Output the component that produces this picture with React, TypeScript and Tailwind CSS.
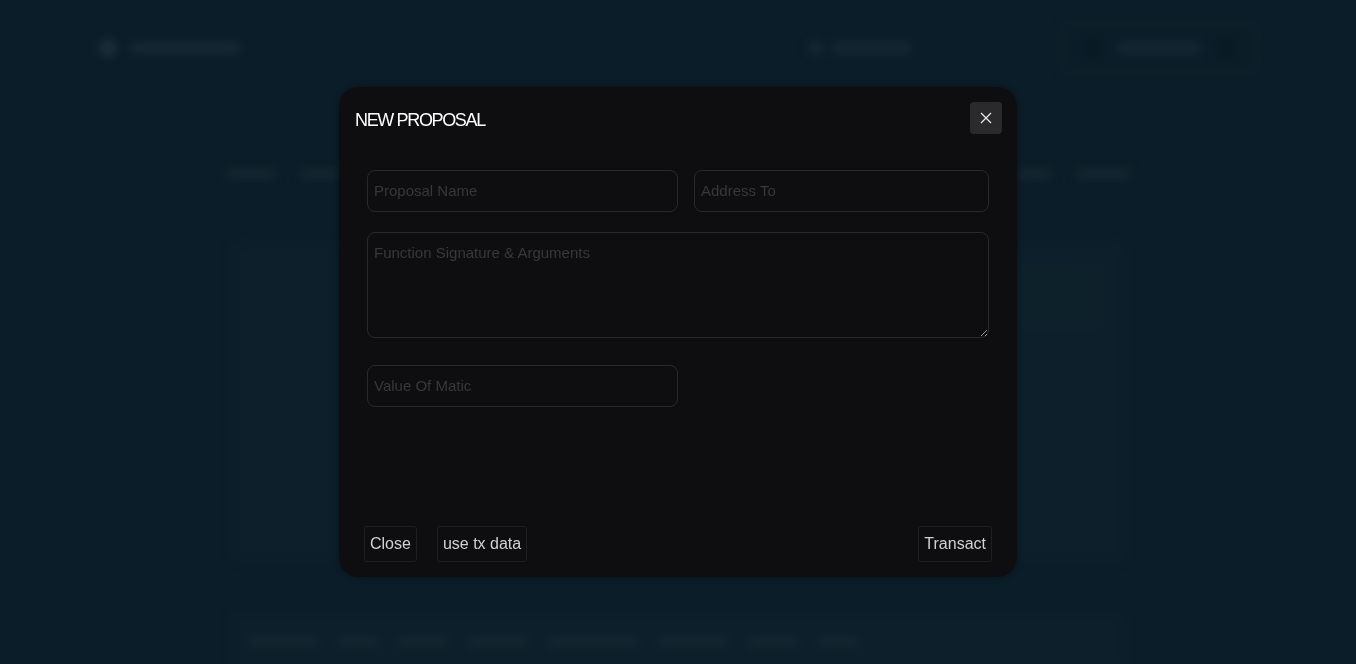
import React from "react";

const font = { fontFamily: '"Liberation Sans", Arial, sans-serif' };

function BackdropPage() {
    // the page behind the dialog, blurred out
    return (
        <div className="min-h-[664px] w-full bg-[#0b1d28] overflow-hidden">
            <div className="blur-[4px]">
                <header className="flex items-center justify-between px-[98px] h-[96px]">
                    <div className="flex items-center gap-3">
                        <div className="w-5 h-5 rounded-full bg-[#1a2c36]" />
                        <div className="w-[110px] h-3 rounded bg-[#16272f]" />
                    </div>
                    <div className="flex items-center gap-2 ml-[420px]">
                        <div className="w-4 h-4 rounded-full bg-[#15262f]" />
                        <div className="w-[80px] h-3 rounded bg-[#15262f]" />
                    </div>
                    <div className="flex items-center gap-4 w-[198px] h-[50px] border-2 border-[#13252f] rounded-lg px-5">
                        <div className="w-5 h-5 rounded-full bg-[#0a1a23]" />
                        <div className="w-[90px] h-3 rounded bg-[#15262f]" />
                        <div className="w-5 h-5 rounded-full bg-[#0a1a23]" />
                    </div>
                </header>
                <div className="mx-auto w-[905px] mt-[72px] flex items-center justify-between">
                    <div className="flex gap-6">
                        <div className="w-[50px] h-3 rounded bg-[#13252e]" />
                        <div className="w-[40px] h-3 rounded bg-[#13252e]" />
                    </div>
                    <div className="flex gap-6">
                        <div className="w-[35px] h-3 rounded bg-[#13252e]" />
                        <div className="w-[55px] h-3 rounded bg-[#13252e]" />
                    </div>
                </div>
                <div className="mx-auto w-[895px] h-[320px] mt-[62px] border border-[#10222c] rounded-lg bg-[#0c1f2a] flex justify-end p-6">
                    <div className="w-[85px] h-[60px] border border-[#122530] rounded-md bg-[#0d212b]" />
                </div>
                <div className="mx-auto w-[895px] h-[60px] mt-[50px] border border-[#10222c] rounded-lg bg-[#0c1f2a] flex items-center gap-5 px-4">
                    <div className="w-[70px] h-3 rounded bg-[#13262f]" />
                    <div className="w-[40px] h-3 rounded bg-[#13262f]" />
                    <div className="w-[50px] h-3 rounded bg-[#13262f]" />
                    <div className="w-[60px] h-3 rounded bg-[#13262f]" />
                    <div className="w-[90px] h-3 rounded bg-[#13262f]" />
                    <div className="w-[70px] h-3 rounded bg-[#13262f]" />
                    <div className="w-[50px] h-3 rounded bg-[#13262f]" />
                    <div className="w-[40px] h-3 rounded bg-[#13262f]" />
                </div>
            </div>
        </div>
    );
}

const fieldCls =
    "bg-transparent border border-[#29292c] rounded-lg px-[6px] text-[15px] text-[#d0d0d0] placeholder:text-[#38383b] outline-none";

const btnCls =
    "h-9 px-[5px] border border-[#1f1f22] rounded-[3px] text-base text-[#d2d2d2] bg-transparent";

export default function App() {
    return (
        <div className="relative w-full min-h-[664px]" style={font}>
            <BackdropPage />

            <div className="fixed inset-0 flex items-center justify-center">
                <div className="w-[678px] h-[490px] rounded-[20px] bg-[#0e0e10] flex flex-col shadow-[0_0_6px_rgba(0,0,0,0.4)]">
                    <div className="flex items-center justify-between pl-4 pr-[15px] pt-[15px]">
                        <h2 className="text-[18px] tracking-[-0.075em] text-white mt-[4px]">NEW PROPOSAL</h2>
                        <button className="w-8 h-8 rounded bg-[#2a2a2d] flex items-center justify-center">
                            <svg width="12" height="12" viewBox="0 0 12 12" fill="none" stroke="#e8e8e8" strokeWidth="1.3">
                                <path d="M1 1l10 10M11 1L1 11" />
                            </svg>
                        </button>
                    </div>

                    <div className="px-7 mt-9 flex flex-col">
                        <div className="flex gap-4">
                            <input className={`${fieldCls} w-[311px] h-[42px] pb-[2px]`} placeholder="Proposal Name" />
                            <input className={`${fieldCls} flex-1 h-[42px] pb-[2px]`} placeholder="Address To" />
                        </div>
                        <textarea
                            className={`${fieldCls} mt-5 h-[106px] py-[9px] block`}
                            placeholder="Function Signature & Arguments"
                        />
                        <input className={`${fieldCls} mt-[27px] w-[311px] h-[42px] pb-[2px]`} placeholder="Value Of Matic" />
                    </div>

                    <div className="mt-auto flex items-center px-[25px] pb-[15px]">
                        <button className={btnCls}>Close</button>
                        <button className={`${btnCls} ml-5`}>use tx data</button>
                        <button className={`${btnCls} ml-auto`}>Transact</button>
                    </div>
                </div>
            </div>
        </div>
    );
}
